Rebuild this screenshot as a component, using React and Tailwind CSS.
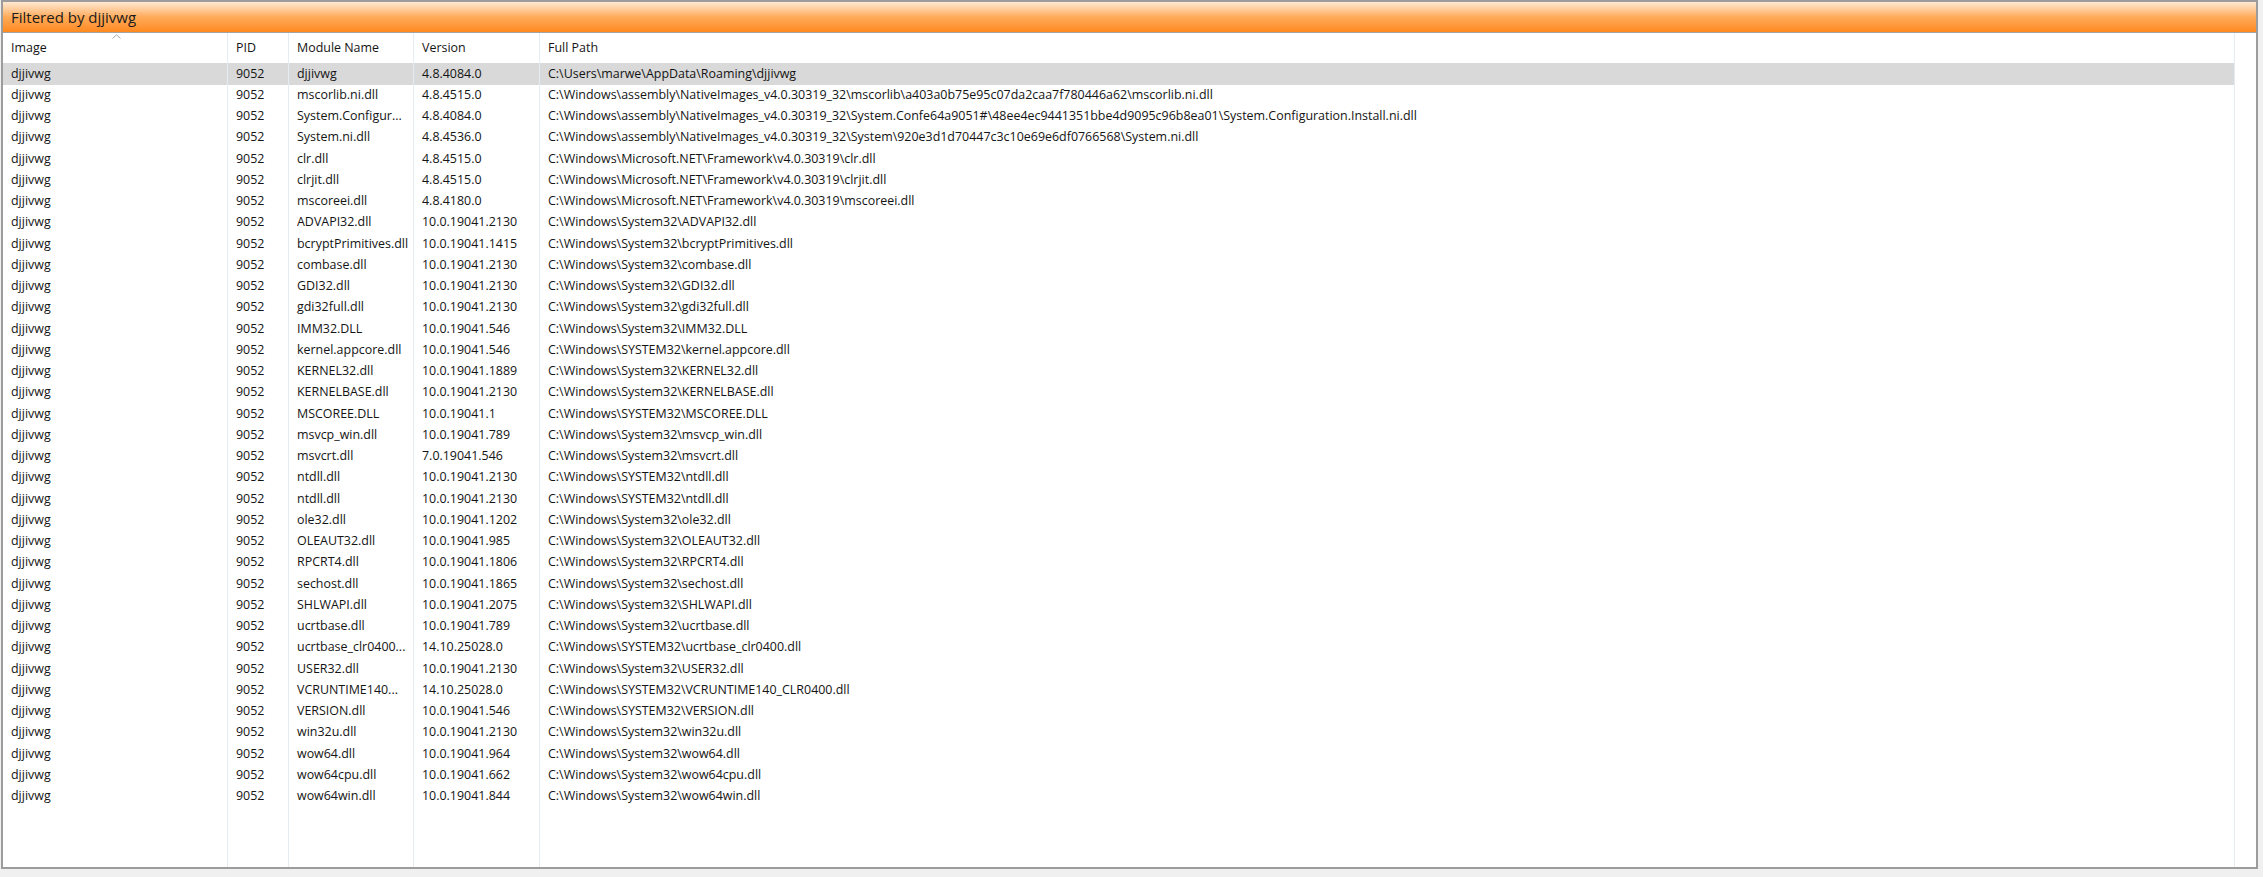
import React from 'react';

const MODULES = [
  ['djjivwg', '4.8.4084.0', 'C:\\Users\\marwe\\AppData\\Roaming\\djjivwg'],
  ['mscorlib.ni.dll', '4.8.4515.0', 'C:\\Windows\\assembly\\NativeImages_v4.0.30319_32\\mscorlib\\a403a0b75e95c07da2caa7f780446a62\\mscorlib.ni.dll'],
  ['System.Configur...', '4.8.4084.0', 'C:\\Windows\\assembly\\NativeImages_v4.0.30319_32\\System.Confe64a9051#\\48ee4ec9441351bbe4d9095c96b8ea01\\System.Configuration.Install.ni.dll'],
  ['System.ni.dll', '4.8.4536.0', 'C:\\Windows\\assembly\\NativeImages_v4.0.30319_32\\System\\920e3d1d70447c3c10e69e6df0766568\\System.ni.dll'],
  ['clr.dll', '4.8.4515.0', 'C:\\Windows\\Microsoft.NET\\Framework\\v4.0.30319\\clr.dll'],
  ['clrjit.dll', '4.8.4515.0', 'C:\\Windows\\Microsoft.NET\\Framework\\v4.0.30319\\clrjit.dll'],
  ['mscoreei.dll', '4.8.4180.0', 'C:\\Windows\\Microsoft.NET\\Framework\\v4.0.30319\\mscoreei.dll'],
  ['ADVAPI32.dll', '10.0.19041.2130', 'C:\\Windows\\System32\\ADVAPI32.dll'],
  ['bcryptPrimitives.dll', '10.0.19041.1415', 'C:\\Windows\\System32\\bcryptPrimitives.dll'],
  ['combase.dll', '10.0.19041.2130', 'C:\\Windows\\System32\\combase.dll'],
  ['GDI32.dll', '10.0.19041.2130', 'C:\\Windows\\System32\\GDI32.dll'],
  ['gdi32full.dll', '10.0.19041.2130', 'C:\\Windows\\System32\\gdi32full.dll'],
  ['IMM32.DLL', '10.0.19041.546', 'C:\\Windows\\System32\\IMM32.DLL'],
  ['kernel.appcore.dll', '10.0.19041.546', 'C:\\Windows\\SYSTEM32\\kernel.appcore.dll'],
  ['KERNEL32.dll', '10.0.19041.1889', 'C:\\Windows\\System32\\KERNEL32.dll'],
  ['KERNELBASE.dll', '10.0.19041.2130', 'C:\\Windows\\System32\\KERNELBASE.dll'],
  ['MSCOREE.DLL', '10.0.19041.1', 'C:\\Windows\\SYSTEM32\\MSCOREE.DLL'],
  ['msvcp_win.dll', '10.0.19041.789', 'C:\\Windows\\System32\\msvcp_win.dll'],
  ['msvcrt.dll', '7.0.19041.546', 'C:\\Windows\\System32\\msvcrt.dll'],
  ['ntdll.dll', '10.0.19041.2130', 'C:\\Windows\\SYSTEM32\\ntdll.dll'],
  ['ntdll.dll', '10.0.19041.2130', 'C:\\Windows\\SYSTEM32\\ntdll.dll'],
  ['ole32.dll', '10.0.19041.1202', 'C:\\Windows\\System32\\ole32.dll'],
  ['OLEAUT32.dll', '10.0.19041.985', 'C:\\Windows\\System32\\OLEAUT32.dll'],
  ['RPCRT4.dll', '10.0.19041.1806', 'C:\\Windows\\System32\\RPCRT4.dll'],
  ['sechost.dll', '10.0.19041.1865', 'C:\\Windows\\System32\\sechost.dll'],
  ['SHLWAPI.dll', '10.0.19041.2075', 'C:\\Windows\\System32\\SHLWAPI.dll'],
  ['ucrtbase.dll', '10.0.19041.789', 'C:\\Windows\\System32\\ucrtbase.dll'],
  ['ucrtbase_clr0400...', '14.10.25028.0', 'C:\\Windows\\SYSTEM32\\ucrtbase_clr0400.dll'],
  ['USER32.dll', '10.0.19041.2130', 'C:\\Windows\\System32\\USER32.dll'],
  ['VCRUNTIME140...', '14.10.25028.0', 'C:\\Windows\\SYSTEM32\\VCRUNTIME140_CLR0400.dll'],
  ['VERSION.dll', '10.0.19041.546', 'C:\\Windows\\SYSTEM32\\VERSION.dll'],
  ['win32u.dll', '10.0.19041.2130', 'C:\\Windows\\System32\\win32u.dll'],
  ['wow64.dll', '10.0.19041.964', 'C:\\Windows\\System32\\wow64.dll'],
  ['wow64cpu.dll', '10.0.19041.662', 'C:\\Windows\\System32\\wow64cpu.dll'],
  ['wow64win.dll', '10.0.19041.844', 'C:\\Windows\\System32\\wow64win.dll'],
];

// column cells: fixed widths, light separator on the right
const cell = 'shrink-0 h-full border-r border-[#e4ecf4] pl-2 whitespace-nowrap overflow-hidden flex items-center';

const Row = ({ cols, className = '' }) => (
  <div className={`flex h-[21.25px] ${className}`}>
    <div className={`${cell} w-[225px]`}>{cols[0]}</div>
    <div className={`${cell} w-[61px]`}>{cols[1]}</div>
    <div className={`${cell} w-[125px]`}>{cols[2]}</div>
    <div className={`${cell} w-[126px]`}>{cols[3]}</div>
    <div className={`${cell} w-[1695px]`}>{cols[4]}</div>
  </div>
);

export default function App() {
  return (
    <div className="w-[2263px] h-[877px] bg-[#f0f0f0] overflow-hidden">
      <div className="ml-px w-[2257px] h-[869px] border-2 border-[#9c9c9c] bg-white flex flex-col text-[#141414] font-['Open_Sans','Noto_Sans',sans-serif] text-[12.45px]">
        {/* Title bar */}
        <div className="h-[31px] shrink-0 border-b border-[#a3a3a3] bg-gradient-to-b from-[#ffe9d3] via-[#ffab58] to-[#ff891b] flex items-center pl-2 text-[15px] text-[#1c1c1c]">
          Filtered by djjivwg
        </div>

        {/* Column headers */}
        <div className="relative h-[30.33px] shrink-0">
          <Row className="h-full" cols={['Image', 'PID', 'Module Name', 'Version', 'Full Path']} />
          <svg className="absolute left-[109px] top-[1px]" width="9" height="5" viewBox="0 0 9 5">
            <polyline points="0.5,4.5 4.5,0.8 8.5,4.5" fill="none" stroke="#a8a8a8" strokeWidth="1" />
          </svg>
        </div>

        {/* Rows */}
        {MODULES.map(([name, version, path], i) => (
          <Row
            key={i}
            className={i === 0 ? 'bg-[#d9d9d9] w-[2232px]' : ''}
            cols={['djjivwg', '9052', name, version, path]}
          />
        ))}

        {/* Empty list area keeps the column lines */}
        <div className="flex-1 flex">
          <div className={`${cell} w-[225px]`} />
          <div className={`${cell} w-[61px]`} />
          <div className={`${cell} w-[125px]`} />
          <div className={`${cell} w-[126px]`} />
          <div className={`${cell} w-[1695px]`} />
        </div>
      </div>
    </div>
  );
}
